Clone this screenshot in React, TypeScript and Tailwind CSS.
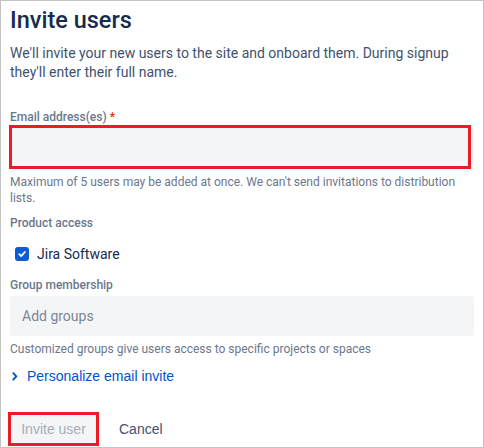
import React from "react";

export default function App() {
  return (
    <div className="w-[484px] h-[448px] border border-[#c3c3c3] bg-white px-[9px] pt-[5px] overflow-hidden font-['Roboto',sans-serif] text-[#172b4d]">
      <h1 className="text-[23.5px] leading-[28px] font-medium text-[#172b4d] whitespace-nowrap">Invite users</h1>
      <p className="mt-[10px] text-[14px] leading-[19px] text-[#42526e] whitespace-nowrap">
        We'll invite your new users to the site and onboard them. During signup
        <br />
        they'll enter their full name.
      </p>

      <div className="mt-[27px] flex items-center text-[12px] leading-[16px] font-medium text-[#6b778c]">
        Email address(es)
        <span className="ml-[3px] text-[#de350b]">*</span>
      </div>
      <div className="relative mt-[2px] h-[40px] rounded-[3px] bg-[#f4f5f7]">
        <div className="absolute left-[-1px] right-[3px] top-[-2px] bottom-[-2px] border-[3px] border-[#ed1c24]" />
      </div>
      <p className="mt-[7px] text-[12px] leading-[16px] text-[#6b778c] whitespace-nowrap">
        Maximum of 5 users may be added at once. We can't send invitations to distribution
        <br />
        lists.
      </p>

      <div className="mt-[9px] text-[12px] leading-[16px] font-medium text-[#6b778c]">Product access</div>
      <div className="mt-[11px] flex items-center pl-[5px] h-[24px]">
        <div className="w-[14px] h-[14px] rounded-[3px] bg-[#0b5cd5] flex items-center justify-center">
          <svg width="10" height="10" viewBox="0 0 10 10" fill="none">
            <path d="M2.2 5.2 L4.2 7.1 L7.9 3" stroke="white" strokeWidth="1.8" strokeLinecap="round" strokeLinejoin="round" />
          </svg>
        </div>
        <span className="ml-[8px] text-[14px] text-[#172b4d]">Jira Software</span>
      </div>

      <div className="mt-[11px] text-[12px] leading-[16px] font-medium text-[#6b778c]">Group membership</div>
      <div className="mt-[3px] h-[40px] rounded-[3px] bg-[#f4f5f7] flex items-center px-[12px] text-[14px] text-[#7a869a]">
        Add groups
      </div>
      <p className="mt-[5px] text-[12px] leading-[16px] text-[#6b778c] whitespace-nowrap">
        Customized groups give users access to specific projects or spaces
      </p>

      <div className="mt-[9px] h-[20px] flex items-center font-['Liberation_Sans',Arial,sans-serif] text-[14px] leading-[20px] text-[#0052cc]">
        <svg width="6" height="9" viewBox="0 0 6 9" className="ml-[2px]" fill="none">
          <path d="M1.3 1.2 L4.3 4.4 L1.3 7.6" stroke="#0052cc" strokeWidth="1.9" strokeLinecap="round" strokeLinejoin="round" />
        </svg>
        <span className="ml-[9px]">Personalize email invite</span>
      </div>

      <div className="mt-[26px] flex items-center font-['Liberation_Sans',Arial,sans-serif] text-[14px]">
        <div className="relative ml-[-2px] h-[34px] w-[91px] flex items-center justify-center">
          <div className="absolute inset-[3px] bg-[#f4f5f7]" />
          <div className="absolute inset-0 border-[3px] border-[#ed1c24]" />
          <span className="relative text-[#a5adba]">Invite user</span>
        </div>
        <span className="ml-[20px] text-[#42526e]">Cancel</span>
      </div>
    </div>
  );
}
